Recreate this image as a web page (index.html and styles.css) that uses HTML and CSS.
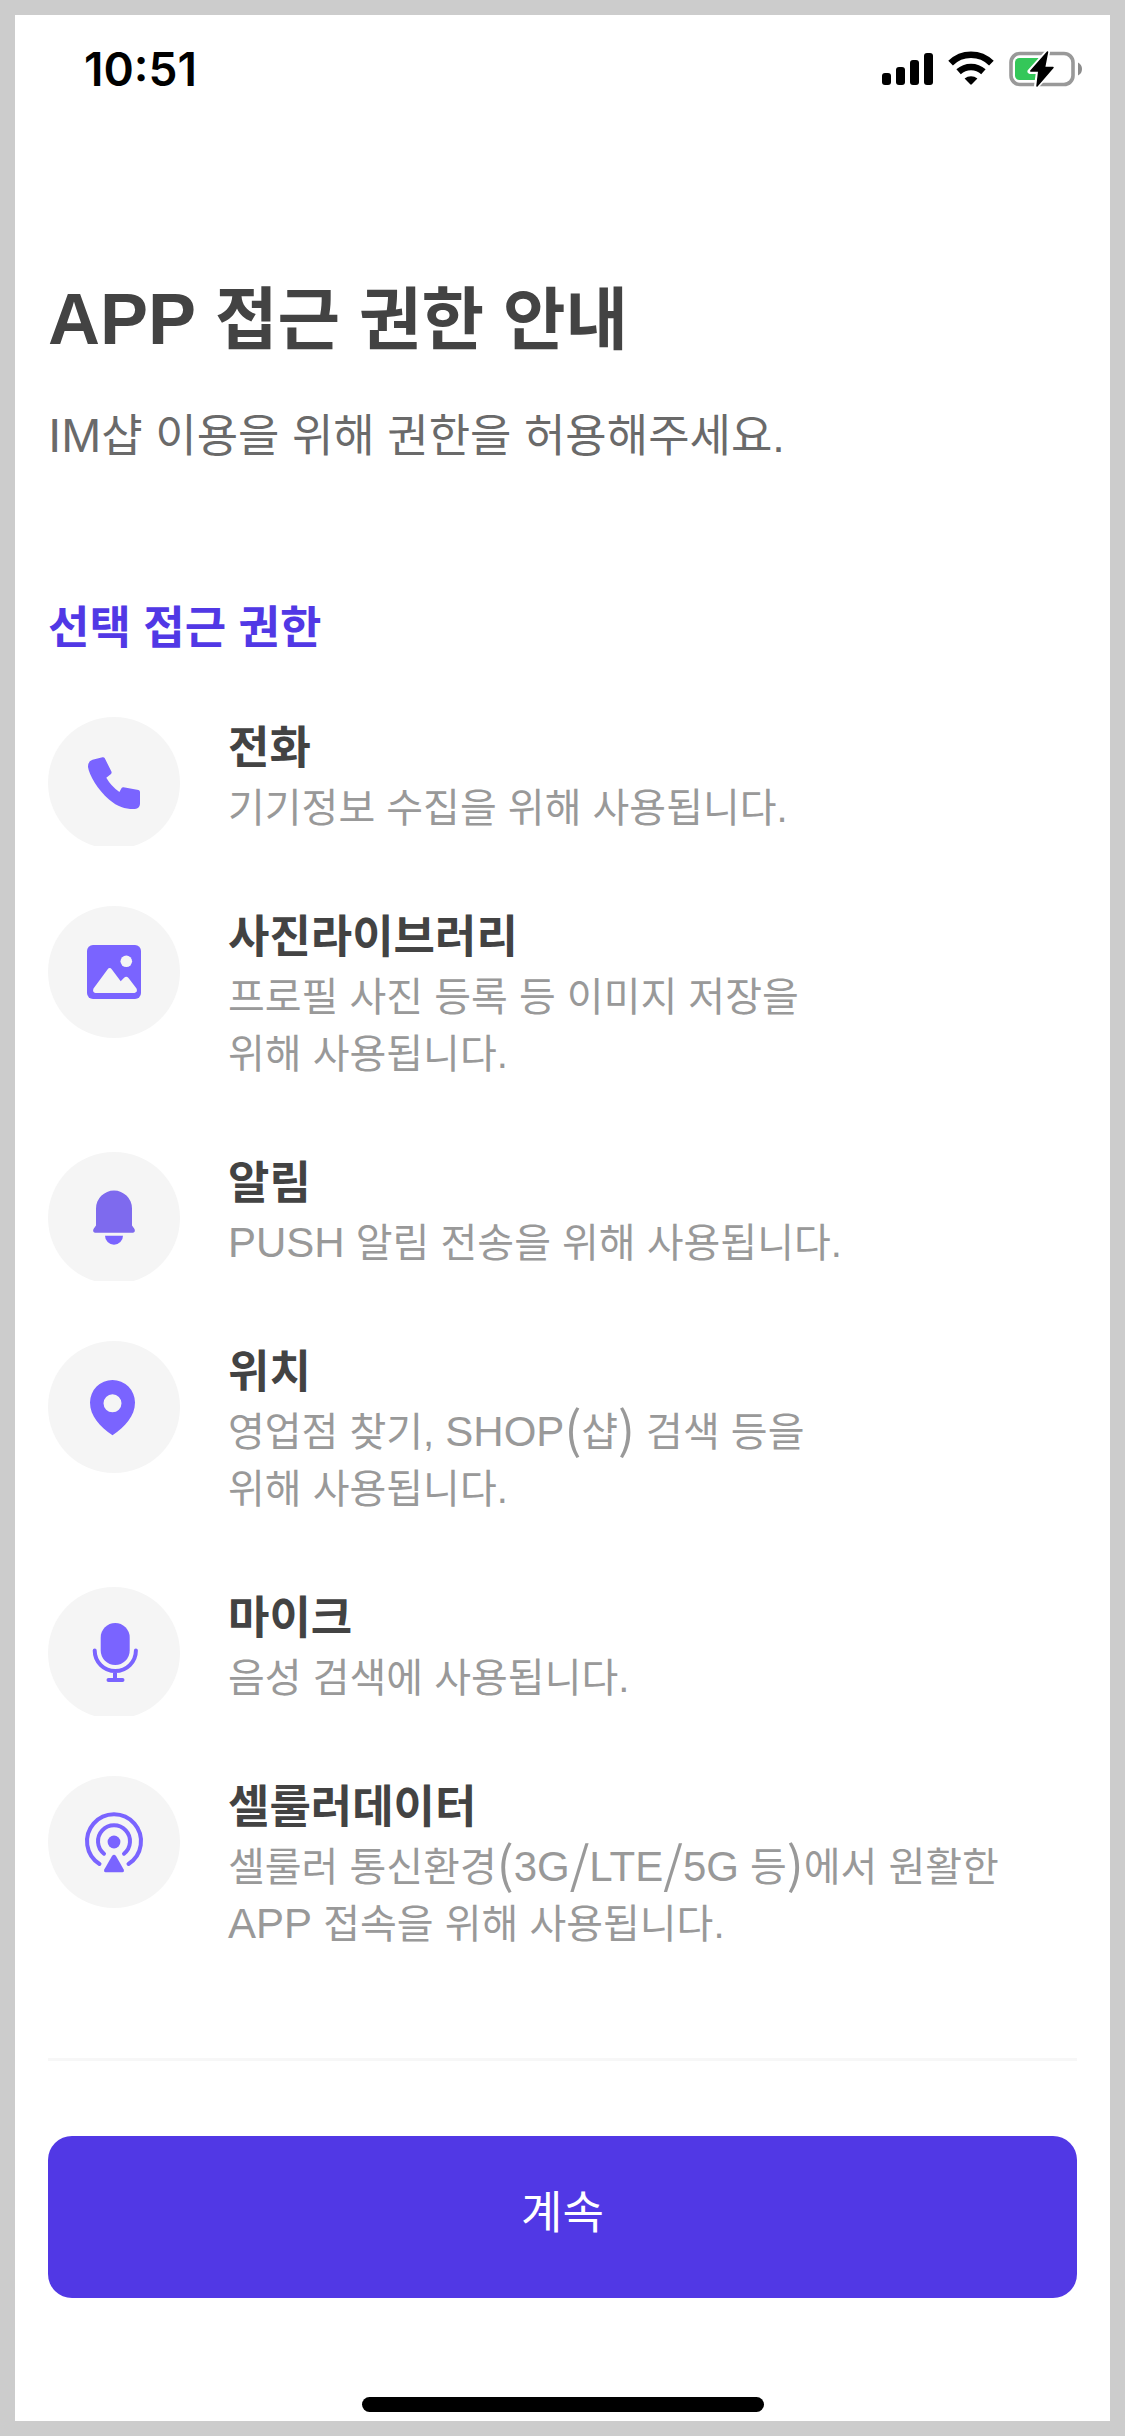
FILE: index.html
```html
<!DOCTYPE html>
<html lang="ko">
<head>
<meta charset="utf-8">
<meta name="viewport" content="width=device-width, initial-scale=1">
<title>APP 접근 권한 안내</title>
<link rel="stylesheet" href="styles.css">
</head>
<body>
<div class="screen">
  <header class="status-bar">
    <time class="clock">10:51</time>
    <svg class="status-icons" viewBox="0 0 202 38" aria-hidden="true">
      <g fill="#000">
        <rect x="0" y="23" width="9" height="12" rx="3"/>
        <rect x="14" y="17" width="9" height="18" rx="3"/>
        <rect x="28" y="10" width="9" height="25" rx="3"/>
        <rect x="42" y="3" width="9" height="32" rx="3"/>
      </g>
      <g fill="none" stroke="#000" stroke-width="6.6">
        <path d="M68.6 13.2a29 29 0 0 1 40.8 0"/>
        <path d="M76.6 21.8a18.5 18.5 0 0 1 24.800 0"/>
      </g>
      <path d="M82.600 28.500a10.500 10.500 0 0 1 12.800 0l-5.600 5.800q-.8.8-1.600 0z" fill="#000"/>
      <rect x="129" y="3.500" width="62" height="31" rx="9" fill="none" stroke="#999" stroke-width="3.600"/>
      <path d="M196 12.500q4 2 4 6.500t-4 6.500z" fill="#8c8c8c"/>
      <rect x="133" y="8" width="27" height="22" rx="4.500" fill="#34c759"/>
      <path d="M165.500 2 148 21.500h8.500L154.500 36 172 17.500h-9.500z" fill="#000" stroke="#fff" stroke-width="5" stroke-linejoin="round"/>
      <path d="M165.500 2 148.800 21h8L155 36 171 17.500h-8.500z" fill="#000" stroke="#000" stroke-width="1.500" stroke-linejoin="round"/>
    </svg>
  </header>

  <main class="content">
    <h1 class="title"><span class="title-latin">APP</span> 접근 권한 안내</h1>
    <p class="subtitle"><span class="subtitle-latin">IM</span>샵 이용을 위해 권한을 허용해주세요.</p>

    <h2 class="section-title">선택 접근 권한</h2>
    <ul class="permissions">
      <li class="permission">
        <svg class="permission-icon" viewBox="0 0 132 132" aria-hidden="true">
          <path d="M44.500 42.800 54.500 40.300Q56 40 56.800 41.300L63.400 54.600Q64 56 63 57L58.300 60.700Q63 69 71.400 75L73.600 71Q74.300 70.100 75.500 70.300L90.500 73Q92 73.400 92 75V87Q91.500 91.500 87 92C78 92.300 70.500 90.500 61 82.500 50 73 41 58 40 50Q39.800 44.300 44.500 42.800Z" fill="#7a64ff"/>
        </svg>
        <div class="permission-text">
          <h3 class="permission-name">전화</h3>
          <p class="permission-desc">기기정보 수집을 위해 사용됩니다.</p>
        </div>
      </li>
      <li class="permission">
        <svg class="permission-icon" viewBox="0 0 132 132" aria-hidden="true">
          <rect x="39" y="39" width="54" height="54" rx="6" fill="#7a64ff"/>
          <circle cx="78.300" cy="55.300" r="5.800" fill="#f5f5f5"/>
          <path d="M59.500 63.500q2.200-2.800 4.400 0l8.800 11.800 3.400-3.600q2.200-2 4.400.2l8 10.600q1.500 3.500-2 4.500H47.500q-3.500-.8-2-4.500z" fill="#f5f5f5"/>
        </svg>
        <div class="permission-text">
          <h3 class="permission-name">사진라이브러리</h3>
          <p class="permission-desc">프로필 사진 등록 등 이미지 저장을<br>위해 사용됩니다.</p>
        </div>
      </li>
      <li class="permission">
        <svg class="permission-icon" viewBox="0 0 132 132" aria-hidden="true">
          <path d="M48 56.500a18 18 0 0 1 36 0V73.500l2.500 3.500q1.200 3-1.500 3.700H47q-2.700-.7-1.500-3.700l2.500-3.500z" fill="#7e6aee"/>
          <path d="M57 83.700h18a9 9 0 0 1-18 0z" fill="#7a64ff"/>
        </svg>
        <div class="permission-text">
          <h3 class="permission-name">알림</h3>
          <p class="permission-desc"><span class="desc-latin">PUSH</span> 알림 전송을 위해 사용됩니다.</p>
        </div>
      </li>
      <li class="permission">
        <svg class="permission-icon" viewBox="0 0 132 132" aria-hidden="true">
          <path d="M64.500 39A22.500 22.500 0 0 0 42 61.500C42 75 52 86 64.500 94.300 77 86 87 75 87 61.500A22.500 22.500 0 0 0 64.500 39Zm0 14.300a9 9 0 1 1 0 18 9 9 0 0 1 0-18Z" fill="#7a64ff"/>
        </svg>
        <div class="permission-text">
          <h3 class="permission-name">위치</h3>
          <p class="permission-desc">영업점 찾기, <span class="desc-latin">SHOP</span><span class="desc-mark">(</span>샵<span class="desc-mark">)</span> 검색 등을<br>위해 사용됩니다.</p>
        </div>
      </li>
      <li class="permission">
        <svg class="permission-icon" viewBox="0 0 132 132" aria-hidden="true">
          <rect x="52.700" y="36" width="29" height="42" rx="14.500" fill="#7a64ff"/>
          <path d="M46.700 63.500a20.600 20.600 0 0 0 41.200 0M67 84v8.500M60.500 93h14" fill="none" stroke="#7a64ff" stroke-width="4" stroke-linecap="round"/>
        </svg>
        <div class="permission-text">
          <h3 class="permission-name">마이크</h3>
          <p class="permission-desc">음성 검색에 사용됩니다.</p>
        </div>
      </li>
      <li class="permission">
        <svg class="permission-icon" viewBox="0 0 132 132" aria-hidden="true">
          <g fill="none" stroke="#7a64ff" stroke-width="4" stroke-linecap="round">
            <path d="M51.500 88a27 27 0 1 1 29 0"/>
            <path d="M56 77.700a16 16 0 1 1 20 0"/>
          </g>
          <circle cx="66" cy="66" r="6.400" fill="#7a64ff"/>
          <path d="M64 80q2-2.400 4 0l7.700 13.500q.8 2.600-1.200 2.800h-17q-2-.2-1.200-2.800z" fill="#7a64ff"/>
        </svg>
        <div class="permission-text">
          <h3 class="permission-name">셀룰러데이터</h3>
          <p class="permission-desc">셀룰러 통신환경<span class="desc-mark">(</span><span class="desc-latin">3G</span><span class="desc-mark">/</span><span class="desc-latin">LTE</span><span class="desc-mark">/</span><span class="desc-latin">5G</span> 등<span class="desc-mark">)</span>에서 원활한<br><span class="desc-latin">APP</span> 접속을 위해 사용됩니다.</p>
        </div>
      </li>
    </ul>
  </main>

  <footer class="footer">
    <button class="continue" type="button">계속</button>
  </footer>
  <div class="home-indicator"></div>
</div>
</body>
</html>
```

FILE: styles.css
```css
* {
  box-sizing: border-box;
  margin: 0;
  padding: 0;
}

body {
  background: #fff;
  color: #434343;
  font-family: "Liberation Sans", "Noto Sans CJK KR", sans-serif;
}

.screen {
  display: flex;
  flex-direction: column;
  min-height: 100vh;
  border: 15px solid #ccc;
  padding: 0 33px 9px;
  background: #fff;
}

.status-bar {
  display: flex;
  align-items: center;
  justify-content: space-between;
  height: 108px;
  padding-left: 36px;
}

.clock {
  color: #000;
  font: 600 46px/54px Inter, sans-serif;
}

.status-icons {
  width: 202px;
  height: 38px;
  margin-right: -7px;
}

.content {
  padding-top: 144px;
}

.title {
  font-size: 68px;
  font-weight: 700;
  line-height: 105px;
}

.title-latin {
  font-size: 72px;
}

.subtitle {
  margin-top: 30px;
  color: #6a6a6a;
  font-size: 45px;
  line-height: 66px;
}

.subtitle-latin {
  font-size: 48px;
}

.section-title {
  margin-top: 126px;
  color: #5138e5;
  font-size: 45px;
  font-weight: 700;
  line-height: 66px;
}

.permissions {
  display: grid;
  gap: 60px;
  margin-top: 55px;
  list-style: none;
}

.permission {
  display: flex;
  align-items: flex-start;
  gap: 48px;
  overflow: hidden;
}

.permission-icon {
  flex: none;
  width: 132px;
  height: 132px;
  margin-bottom: -3px;
  border-radius: 50%;
  background: #f5f5f5;
}

.permission-text {
  padding: 2px 0 9px;
}

.permission-name {
  font-size: 45px;
  font-weight: 700;
  line-height: 60px;
}

.permission-desc {
  margin-top: 1px;
  color: #999;
  font-size: 40px;
  line-height: 57px;
}

.desc-latin {
  font-size: 42px;
  line-height: 48px;
}

/* Brackets and slashes span the full height of the Hangul around them. */
.desc-mark {
  font-family: "Noto Sans CJK KR", sans-serif;
  font-size: 50px;
  line-height: 40px;
  vertical-align: -6px;
}

.footer {
  margin-top: 96px;
  border-top: 3px solid #f7f7f7;
  padding-top: 75px;
}

.continue {
  width: 100%;
  height: 162px;
  border: 0;
  border-radius: 24px;
  background: #5138e5;
  color: #fff;
  font: inherit;
  font-size: 45px;
  padding-bottom: 16px;
}

.home-indicator {
  width: 402px;
  height: 15px;
  margin: auto auto 0;
  border-radius: 8px;
  background: #000;
}
```
